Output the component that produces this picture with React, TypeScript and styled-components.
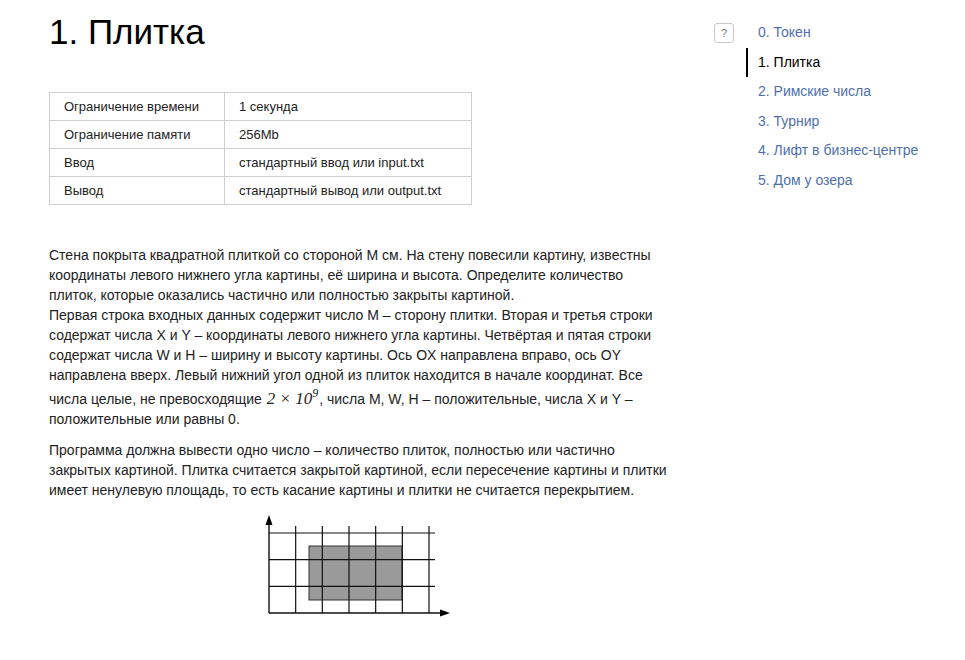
import styled, { createGlobalStyle } from "styled-components";

const GlobalStyle = createGlobalStyle`
  body {
    margin: 0;
    background: #fff;
    font-family: "Liberation Sans", Arial, sans-serif;
    color: #000;
  }
`;

const Page = styled.div`
  display: flex;
  align-items: flex-start;
  width: 965px;
  height: 660px;
  overflow: hidden;
`;

const Main = styled.main`
  width: 620px;
  padding-left: 49px;
`;

const Title = styled.h1`
  margin: 12px 0 0;
  font-size: 35px;
  line-height: 40px;
  font-weight: 400;
`;

const Limits = styled.table`
  margin-top: 40px;
  border-collapse: collapse;
  width: 423px;
  font-size: 13px;
`;

const Cell = styled.td<{ $wide?: boolean }>`
  border: 1px solid #cfcfcf;
  height: 27px;
  padding: 0 14px;
  width: ${({ $wide }) => ($wide ? "auto" : "146px")};
  color: #222;
`;

const Statement = styled.div`
  margin-top: 40px;
  font-size: 14px;
  line-height: 20px;
  color: #222;
`;

const Para = styled.p`
  margin: 0 0 11px;
`;

const Math = styled.span`
  display: inline-block;
  padding: 4px 1px 0;
  line-height: 20px;
  font-family: "Liberation Serif", "Times New Roman", serif;
  font-style: italic;
  font-size: 17px;
`;

const Power = styled.sup`
  font-size: 12px;
  line-height: 0;
`;

const Figure = styled.div`
  display: flex;
  justify-content: center;
  margin-top: 3px;
`;

const Side = styled.aside`
  display: flex;
  align-items: flex-start;
  margin-left: 45px;
  padding-top: 18px;
`;

const HelpButton = styled.button`
  width: 20px;
  height: 20px;
  margin-top: 5px;
  padding: 0;
  border: 1px solid #c8c8c8;
  border-radius: 3px;
  background: #fff;
  color: #777;
  font-family: "Liberation Sans", Arial, sans-serif;
  font-size: 11px;
`;

const Problems = styled.ul`
  list-style: none;
  margin: 0 0 0 12px;
  padding: 0;
  font-size: 14px;
`;

const Problem = styled.li<{ $active?: boolean }>`
  line-height: 29.6px;
  padding-left: 10px;
  border-left: 2px solid ${({ $active }) => ($active ? "#000" : "transparent")};
  color: ${({ $active }) => ($active ? "#000" : "#4f6fab")};
  white-space: nowrap;
`;

const limits = [
  ["Ограничение времени", "1 секунда"],
  ["Ограничение памяти", "256Mb"],
  ["Ввод", "стандартный ввод или input.txt"],
  ["Вывод", "стандартный вывод или output.txt"],
];

const problems = [
  "0. Токен",
  "1. Плитка",
  "2. Римские числа",
  "3. Турнир",
  "4. Лифт в бизнес-центре",
  "5. Дом у озера",
];

const Grid = () => {
  const step = 80 / 3;
  const xs = Array.from({ length: 7 }, (_, i) => 5 + i * step);
  const ys = [0, 1, 2].map((i) => 22 + i * step);
  return (
    <svg width="190" height="106" viewBox="0 0 190 106">
      <rect x="45" y="35" width="93" height="54" fill="#9a9a9a" stroke="#333" strokeWidth="1" />
      {xs.slice(1).map((x) => (
        <line key={x} x1={x} y1="15" x2={x} y2="102" stroke="#111" strokeWidth="1.2" />
      ))}
      {ys.map((y) => (
        <line key={y} x1="5" y1={y} x2="171" y2={y} stroke="#111" strokeWidth="1.2" />
      ))}
      <line x1="5" y1="12" x2="5" y2="102" stroke="#111" strokeWidth="1.4" />
      <line x1="5" y1="102" x2="178" y2="102" stroke="#111" strokeWidth="1.4" />
      <polygon points="5,4 1.5,14 8.5,14" fill="#000" />
      <polygon points="186,102 176,98.5 176,105.5" fill="#000" />
    </svg>
  );
};

export default function App() {
  return (
    <Page>
      <GlobalStyle />
      <Main>
        <Title>1. Плитка</Title>
        <Limits>
          <tbody>
            {limits.map(([k, v]) => (
              <tr key={k}>
                <Cell>{k}</Cell>
                <Cell $wide>{v}</Cell>
              </tr>
            ))}
          </tbody>
        </Limits>
        <Statement>
          <Para>
            Стена покрыта квадратной плиткой со стороной M см. На стену повесили картину, известны
            координаты левого нижнего угла картины, её ширина и высота. Определите количество
            плиток, которые оказались частично или полностью закрыты картиной.
            <br />
            Первая строка входных данных содержит число M – сторону плитки. Вторая и третья строки
            содержат числа X и Y – координаты левого нижнего угла картины. Четвёртая и пятая строки
            содержат числа W и H – ширину и высоту картины. Ось OX направлена вправо, ось OY
            направлена вверх. Левый нижний угол одной из плиток находится в начале координат. Все
            числа целые, не превосходящие{" "}
            <Math>
              2 × 10<Power>9</Power>
            </Math>
            , числа M, W, H – положительные, числа X и Y – положительные или равны 0.
          </Para>
          <Para>
            Программа должна вывести одно число – количество плиток, полностью или частично
            закрытых картиной. Плитка считается закрытой картиной, если пересечение картины и плитки
            имеет ненулевую площадь, то есть касание картины и плитки не считается перекрытием.
          </Para>
        </Statement>
        <Figure>
          <Grid />
        </Figure>
      </Main>
      <Side>
        <HelpButton>?</HelpButton>
        <Problems>
          {problems.map((p, i) => (
            <Problem key={p} $active={i === 1}>
              {p}
            </Problem>
          ))}
        </Problems>
      </Side>
    </Page>
  );
}
